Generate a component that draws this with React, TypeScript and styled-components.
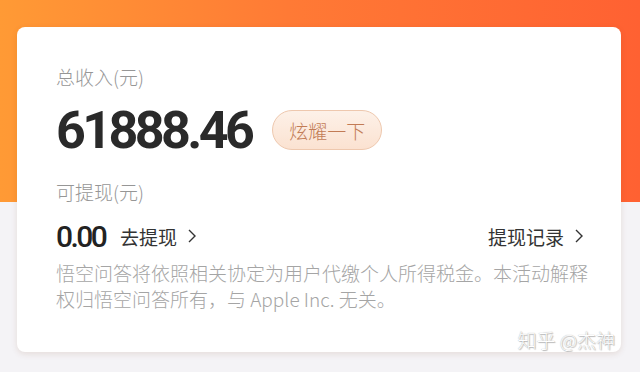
import React from 'react';
import styled, { createGlobalStyle } from 'styled-components';

const GlobalStyle = createGlobalStyle`
  html, body {
    margin: 0;
    padding: 0;
  }
  body {
    width: 640px;
    height: 372px;
    overflow: hidden;
    font-family: "Noto Sans CJK SC", "Noto Sans", sans-serif;
    background: #f4f3f6;
  }
`;

const Page = styled.div`
  width: 640px;
  height: 372px;
  padding: 27px 19px 0 17px;
  box-sizing: border-box;
  background:
    linear-gradient(90deg, #ff9a35 0%, #ff7a35 45%, #ff6132 100%) top / 100% 202px no-repeat,
    #f4f3f6;
`;

const Card = styled.div`
  position: relative;
  height: 325px;
  box-sizing: border-box;
  padding: 37px 20px 0 39px;
  background: #fff;
  border-radius: 8px;
  box-shadow: 0 2px 6px rgba(120, 60, 20, 0.12);
  overflow: hidden;
`;

const Label = styled.div<{ $top?: number }>`
  margin-top: ${p => p.$top ?? 0}px;
  font-size: 19px;
  font-weight: 300;
  line-height: 26px;
  color: #969696;
`;

const AmountRow = styled.div`
  display: flex;
  align-items: center;
  height: 60px;
  margin-top: 10px;
`;

const Amount = styled.span`
  font-family: Roboto, "Liberation Sans", sans-serif;
  font-weight: 700;
  font-size: 52px;
  letter-spacing: -3.6px;
  color: #2a2a2a;
`;

const ShowOff = styled.span`
  margin-left: 21px;
  height: 40px;
  padding: 0 16px;
  display: flex;
  align-items: center;
  box-sizing: border-box;
  border: 1px solid #eec8ae;
  border-radius: 20px;
  background: linear-gradient(180deg, #fdf1e8 0%, #fbe2d1 100%);
  font-size: 19px;
  font-weight: 300;
  color: #c27b55;
`;

const WithdrawRow = styled.div`
  display: flex;
  align-items: center;
  justify-content: space-between;
  height: 34px;
  margin-top: 14px;
  padding-right: 18px;
`;

const Group = styled.div`
  display: flex;
  align-items: center;
`;

const Balance = styled.span`
  font-family: Roboto, "Liberation Sans", sans-serif;
  font-weight: 500;
  font-size: 30px;
  letter-spacing: -2.6px;
  color: #222;
  margin-right: 15px;
`;

const Link = styled.span`
  display: flex;
  align-items: center;
  font-size: 19px;
  color: #333;
  svg {
    margin-left: 11px;
  }
`;

const Note = styled.p`
  margin: 7px 0 0;
  font-size: 19px;
  font-weight: 300;
  line-height: 26px;
  color: #a5a5a5;
  white-space: nowrap;
`;

const Watermark = styled.span`
  position: absolute;
  right: 6px;
  bottom: -1px;
  font-size: 19px;
  font-weight: 300;
  color: #fff;
  text-shadow: 0 0 1px #999, 1px 1px 1px #bbb;
  white-space: nowrap;
`;

const Chevron = () => (
  <svg width="8" height="14" viewBox="0 0 8 14">
    <path d="M1 1l6 6-6 6" fill="none" stroke="#333" strokeWidth="1.4" />
  </svg>
);

const App = () => {
  return (
    <>
      <GlobalStyle />
      <Page>
        <Card>
          <Label>总收入(元)</Label>
          <AmountRow>
            <Amount>61888.46</Amount>
            <ShowOff>炫耀一下</ShowOff>
          </AmountRow>
          <Label $top={19}>可提现(元)</Label>
          <WithdrawRow>
            <Group>
              <Balance>0.00</Balance>
              <Link>去提现<Chevron /></Link>
            </Group>
            <Link>提现记录<Chevron /></Link>
          </WithdrawRow>
          <Note>
            悟空问答将依照相关协定为用户代缴个人所得税金。本活动解释
            <br />
            权归悟空问答所有，与 Apple Inc. 无关。
          </Note>
          <Watermark>知乎 @杰神</Watermark>
        </Card>
      </Page>
    </>
  );
};

export default App;
